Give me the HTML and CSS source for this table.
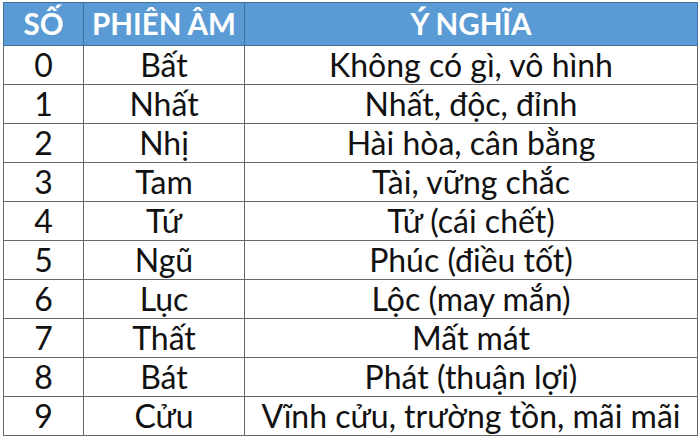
FILE: index.html
```html
<!DOCTYPE html>
<html lang="vi">
<head>
<meta charset="utf-8">
<link rel="stylesheet" href="styles.css">
</head>
<body>
<table class="tbl">
  <colgroup><col class="c1"><col class="c2"><col class="c3"></colgroup>
  <thead>
    <tr><th>SỐ</th><th>PHIÊN ÂM</th><th>Ý NGHĨA</th></tr>
  </thead>
  <tbody>
    <tr><td>0</td><td>Bất</td><td>Không có gì, vô hình</td></tr>
    <tr><td>1</td><td>Nhất</td><td>Nhất, độc, đỉnh</td></tr>
    <tr><td>2</td><td>Nhị</td><td>Hài hòa, cân bằng</td></tr>
    <tr><td>3</td><td>Tam</td><td>Tài, vững chắc</td></tr>
    <tr><td>4</td><td>Tứ</td><td>Tử (cái chết)</td></tr>
    <tr><td>5</td><td>Ngũ</td><td>Phúc (điều tốt)</td></tr>
    <tr><td>6</td><td>Lục</td><td>Lộc (may mắn)</td></tr>
    <tr><td>7</td><td>Thất</td><td>Mất mát</td></tr>
    <tr><td>8</td><td>Bát</td><td>Phát (thuận lợi)</td></tr>
    <tr><td>9</td><td>Cửu</td><td>Vĩnh cửu, trường tồn, mãi mãi</td></tr>
  </tbody>
</table>
</body>
</html>
```
FILE: styles.css
```css
html, body { margin: 0; padding: 0; background: #fff; }
body { padding: 2px 0 0 3px; }
.tbl {
  border-collapse: collapse;
  table-layout: fixed;
  width: 694px;
  font-family: Lato, "Open Sans", sans-serif;
  color: #111;
}
.c1 { width: 80px; }
.c2 { width: 161px; }
.c3 { width: 453px; }
.tbl th, .tbl td {
  padding: 0;
  text-align: center;
  white-space: nowrap;
  overflow: hidden;
  line-height: 1;
}
.tbl th {
  background: #5b9bd5;
  color: #fff;
  font-weight: 700;
  font-size: 29.5px;
  height: 42px;
  border: 1px solid #41719c;
}
.tbl td {
  font-size: 32px;
  height: 38px;
  border: 1px solid #666;
}
```
